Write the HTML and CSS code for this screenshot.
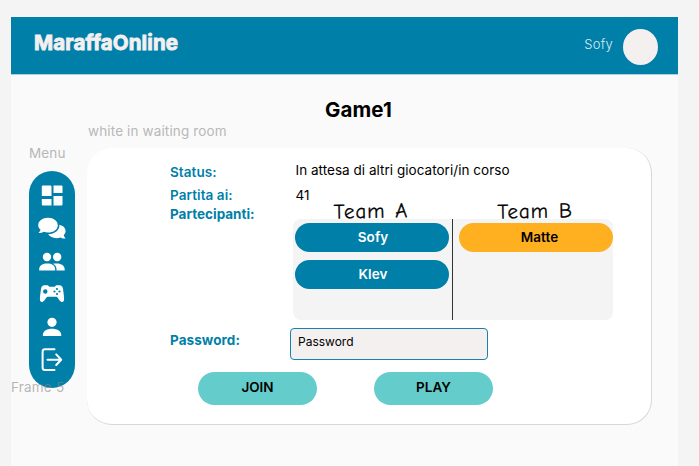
FILE: index.html
```html
<!DOCTYPE html>
<html lang="it">
<head>
<meta charset="utf-8">
<title>MaraffaOnline</title>
<link rel="stylesheet" href="styles.css">
</head>
<body>
<div class="frame">
  <header class="topbar">
    <span class="brand">MaraffaOnline</span>
    <div class="user"><span class="user-name">Sofy</span><span class="avatar"></span></div>
  </header>
  <h1 class="title">Game1</h1>
  <div class="content">
    <aside class="side">
      <span class="label">Menu</span>
      <nav class="menu">
        <svg viewBox="0 0 34 33"><path d="M7.800 6.500h7.700a1 1 0 0 1 1 1v9.500H6.800V7.500a1 1 0 0 1 1-1zM18.500 6.500h8a1 1 0 0 1 1 1v6.500h-9zM6.800 20h9.700v6.500h-8.700a1 1 0 0 1-1-1zM18.500 17h9v8.500a1 1 0 0 1-1 1h-8z"/></svg>
        <svg viewBox="0 0 34 33"><path d="M13 5.800c5.500 0 9.800 3.300 9.800 7.400s-4.300 7.400-9.800 7.400c-1.500 0-3-.3-4.200-.8-1.600.9-3.400 1.400-5.300 1.200 1.100-1 1.800-2.200 2-3.400-1.500-1.200-2.300-2.700-2.300-4.400 0-4.100 4.300-7.400 9.800-7.400z"/><path d="M24.400 12.700c3.800.9 6.200 3.300 6.200 6.200 0 1.600-.7 3-1.900 4.200.3 1.400 1 2.500 2 3.500-2 .1-3.700-.4-5.200-1.200-1.200.5-2.500.8-4 .8-3.800 0-7-1.700-8.300-4.100 6.600 0 11.500-4 11.200-9.400z"/></svg>
        <svg viewBox="0 0 34 33"><circle cx="12" cy="12" r="4.200"/><circle cx="22.200" cy="12" r="4.200"/><path d="M4.200 25.500v-1.200c0-3.700 3.500-5.700 8-5.700s8 2 8 5.700v1.200zM17.900 18.700c1.300-.2 2.500-.3 4-.3 4.500 0 7.800 2.300 7.800 6v1.100h-8.200v-1.300c0-2.300-1.300-4.300-3.600-5.500z"/></svg>
        <svg viewBox="0 0 34 33"><path d="M9.500 7.200h3.300l1.500 1.500h5.400l1.500-1.500h3.300c2.200 0 3 1.500 3.500 3.500l1 8c.4 3.500-.2 5.300-2 5.300-2.500 0-3.500-4.500-5.500-5.300h-9C10.500 19.500 9.500 24 7 24c-1.800 0-2.400-1.800-2-5.300l1-8c.5-2 1.300-3.500 3.500-3.500z"/><g class="cut"><circle cx="10.300" cy="13.500" r="2.200"/><circle cx="22" cy="11" r="1.100"/><circle cx="22" cy="16" r="1.100"/><circle cx="19.500" cy="13.500" r="1.100"/><circle cx="24.500" cy="13.500" r="1.100"/></g></svg>
        <svg viewBox="0 0 34 33"><circle cx="17" cy="11.300" r="4.600"/><path d="M7.900 25v-1.300c0-4 4.500-6 9.100-6s9.200 2 9.200 6V25z"/></svg>
        <svg viewBox="0 0 34 33"><path class="line" d="M19.500 5.300H10Q7.600 5.300 7.600 7.700v15.800q0 2.600 2.400 2.600h9.500M12.500 15.700h13.200M21.200 10.400l5 5.300-5 5.300"/></svg>
      </nav>
      <span class="frame-label">Frame 5</span>
    </aside>
    <main class="main">
      <p class="label">white in waiting room</p>
      <section class="card">
        <dl class="details">
          <dt>Status:</dt><dd>In attesa di altri giocatori/in corso</dd>
          <dt class="round-label">Partita ai:</dt><dd>41</dd>
          <dt class="players-label">Partecipanti:</dt>
          <dd class="players">
            <div class="team-names"><span class="hand">Team A</span><span class="hand">Team B</span></div>
            <div class="board">
              <div class="team team-a"><span class="pill">Sofy</span><span class="pill">Klev</span></div>
              <div class="team team-b"><span class="pill yellow">Matte</span></div>
            </div>
          </dd>
        </dl>
        <div class="password-row"><span class="password-label">Password:</span><div class="field">Password</div></div>
        <div class="actions"><button>JOIN</button><button>PLAY</button></div>
      </section>
    </main>
  </div>
</div>
</body>
</html>
```
FILE: styles.css
```css
* { box-sizing: border-box; }
body { margin: 0; height: 466px; overflow: hidden; padding: 17px 21px 0 11px; background: #f4f4f4; font-family: Inter, "Liberation Sans", sans-serif; color: #000; }
p, dl, dd, h1 { margin: 0; }
.frame { height: 449px; background: #fafafa; }
.topbar { height: 58px; padding: 0 20px 0 23px; display: flex; align-items: center; justify-content: space-between; background: #007fa9; border-bottom: 1px solid #a9d2df; }
.brand { font-size: 20.5px; font-weight: 700; color: #f4f0f0; line-height: 24px; padding-bottom: 5px; -webkit-text-stroke: .9px #f4f0f0; letter-spacing: .12px; }
.user { display: flex; align-items: center; gap: 10px; }
.user-name { font-size: 13px; font-weight: 300; letter-spacing: .3px; color: #dcecf2; padding-bottom: 3px; }
.avatar { width: 35px; height: 36px; border-radius: 50%; background: #f4f0f0; margin-top: 2px; }
.title { height: 47px; padding: 22px 0 0 28px; text-align: center; font-size: 20.500px; letter-spacing: .1px; line-height: 26px; font-weight: 700; }
.content { display: flex; align-items: flex-start; gap: 12px; padding-left: 18px; }
.side { width: 46px; position: relative; }
.label { display: block; font-size: 13.500px; letter-spacing: .14px; line-height: 18px; color: #b8b8b8; white-space: nowrap; }
.side .label { padding: 22px 0 9px; }
.menu { height: 217px; padding-top: 8px; border-radius: 23px; background: #007fa9; display: flex; flex-direction: column; align-items: center; }
.menu svg { width: 34px; height: 33px; fill: #fff; flex: none; }
.menu .cut { fill: #007fa9; }
.menu .line { fill: none; stroke: #fff; stroke-width: 2; stroke-linecap: round; stroke-linejoin: round; }
.frame-label { position: absolute; left: -18px; bottom: -7px; font-size: 13.500px; letter-spacing: .2px; line-height: 16px; white-space: nowrap; color: rgba(135, 135, 135, .6); }
.main { width: 565px; }
.main .label { height: 26px; padding-left: 1px; }
.card { height: 277px; border-radius: 25px; background: #fff; border-right: 1px solid #d8d8d8; border-bottom: 1px solid #d8d8d8; padding: 11px 0 0 83px; }
.details { display: grid; grid-template-columns: 123px 1fr; grid-template-rows: 24px 22px 115px; font-size: 13.500px; letter-spacing: .03px; }
.details dt { font-weight: 600; letter-spacing: .08px; color: #007fa9; line-height: 26px; }
.details .round-label { line-height: 24px; }
.details dd { line-height: 22px; padding-left: 2.500px; }
.details dd:nth-of-type(2) { line-height: 24px; }
.details .players-label { font-weight: 700; line-height: 19px; letter-spacing: 0; }
.details .players { padding: 0; width: 320px; }
.team-names { height: 14px; display: grid; grid-template-columns: 160px 160px; align-items: end; text-align: center; }
.hand { font-family: "Comic Neue", "Patrick Hand", "Noto Sans", sans-serif; font-size: 21px; font-weight: 400; line-height: 20px; letter-spacing: .9px; word-spacing: 2px; -webkit-text-stroke: .25px #000; transform: translate(-2px, -4px) rotate(-1deg); }
.hand + .hand { transform: translate(2px, -4px) rotate(-1deg); }
.board { height: 101px; background: #f4f4f4; border-radius: 8px; display: grid; grid-template-columns: 160px 160px; }
.team { padding: 4px 0 0 2px; display: flex; flex-direction: column; gap: 8px; }
.team-a { border-right: 1px solid #333; }
.team-b { padding-left: 6px; }
.pill { height: 29px; width: 154px; padding-left: 2px; border-radius: 15px; background: #007fa9; color: #fff; font-size: 13.500px; font-weight: 600; letter-spacing: .1px; line-height: 28px; text-align: center; }
.pill.yellow { padding-left: 7px; background: #ffb020; color: #000; }
.password-row { display: grid; grid-template-columns: 120px 198px; padding-top: 8px; }
.password-label { font-size: 13.500px; font-weight: 700; letter-spacing: .08px; color: #007fa9; line-height: 24px; }
.field { height: 32px; background: #f4f0f0; border: 1px solid #1682ad; border-radius: 4px; font-size: 12px; line-height: 26px; padding-left: 7px; }
.actions { display: flex; gap: 57px; padding: 12px 0 0 28px; }
.actions button { border: 0; padding: 0 0 3px; width: 119px; height: 33px; border-radius: 17px; background: #64cccb; color: #000; font: 600 13.500px Inter, sans-serif; }
```
